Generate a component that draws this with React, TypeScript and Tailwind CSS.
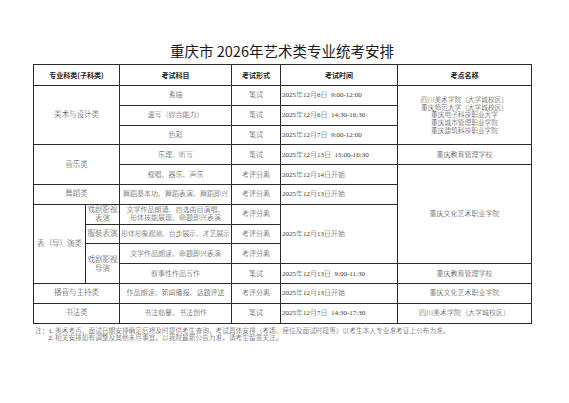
import React from 'react'

const td = 'border border-[#2b2b2b] p-0 text-center align-middle'
const tdLeft = 'border border-[#2b2b2b] p-0 pl-[1px] text-left align-middle whitespace-nowrap'

export default function App() {
  return (
    <div className="min-h-[403px] w-[569px] bg-white pt-[41px] font-['Liberation_Serif','Noto_Sans_CJK_SC',serif] font-light text-[#3a3a3a]">
      {/* Title */}
      <h1 className="ml-[33px] w-[498px] text-center font-['Noto_Sans_CJK_SC',sans-serif] text-[14.5px] font-normal leading-[20px] text-[#1a1a1a]">
        重庆市 2026年艺术类专业统考安排
      </h1>

      {/* Schedule table */}
      <table className="ml-[33px] mt-[3px] w-[498px] table-fixed border-collapse border-[1.5px] border-[#2b2b2b] text-[7px] leading-[8px]">
        <colgroup>
          <col className="w-[52px]" />
          <col className="w-[34px]" />
          <col className="w-[112px]" />
          <col className="w-[49px]" />
          <col className="w-[117px]" />
          <col className="w-[134px]" />
        </colgroup>
        <thead>
          <tr className="h-[21px] font-['Noto_Sans_CJK_SC',sans-serif] font-bold text-[#222]">
            <th colSpan={2} className={td}>专业科类(子科类)</th>
            <th className={td}>考试科目</th>
            <th className={td}>考试形式</th>
            <th className={td}>考试时间</th>
            <th className={td}>考点名称</th>
          </tr>
        </thead>
        <tbody>
          <tr className="h-[19.8px]">
            <td colSpan={2} rowSpan={3} className={`${td} text-[7.5px]`}>美术与设计类</td>
            <td className={td}>素描</td>
            <td className={td}>笔试</td>
            <td className={tdLeft}>2025年12月6日&nbsp;&nbsp;9:00-12:00</td>
            <td rowSpan={3} className={`${td} text-[6.7px] leading-[7.7px]`}>
              四川美术学院（大学城校区）<br />
              重庆师范大学（大学城校区）<br />
              重庆电子科技职业大学<br />
              重庆城市管理职业学院<br />
              重庆建筑科技职业学院
            </td>
          </tr>
          <tr className="h-[19.8px]">
            <td className={td}>速写（综合能力）</td>
            <td className={td}>笔试</td>
            <td className={tdLeft}>2025年12月6日&nbsp;&nbsp;14:30-16:30</td>
          </tr>
          <tr className="h-[19.8px]">
            <td className={td}>色彩</td>
            <td className={td}>笔试</td>
            <td className={tdLeft}>2025年12月7日&nbsp;&nbsp;9:00-12:00</td>
          </tr>

          <tr className="h-[19.8px]">
            <td colSpan={2} rowSpan={2} className={`${td} text-[7.5px]`}>音乐类</td>
            <td className={td}>乐理、听写</td>
            <td className={td}>笔试</td>
            <td className={tdLeft}>2025年12月13日&nbsp;&nbsp;15:00-16:30</td>
            <td className={td}>重庆教育管理学校</td>
          </tr>
          <tr className="h-[19.8px]">
            <td className={td}>视唱、器乐、声乐</td>
            <td className={td}>考评分离</td>
            <td className={tdLeft}>2025年12月14日开始</td>
            <td rowSpan={5} className={td}>重庆文化艺术职业学院</td>
          </tr>

          <tr className="h-[19.8px]">
            <td colSpan={2} className={`${td} text-[7.5px]`}>舞蹈类</td>
            <td className={`${td} whitespace-nowrap`}>舞蹈基本功、舞蹈表演、舞蹈即兴</td>
            <td className={td}>考评分离</td>
            <td className={tdLeft}>2025年12月13日开始</td>
          </tr>

          <tr className="h-[19.8px]">
            <td rowSpan={4} className={`${td} text-[7.5px]`}>表（导）演类</td>
            <td className={`${td} text-[7.5px] leading-[9px]`}>戏剧影视<br />表演</td>
            <td className={`${td} whitespace-nowrap`}>
              文学作品朗诵、自选曲目演唱、<br />
              形体技能展现、命题即兴表演
            </td>
            <td className={td}>考评分离</td>
            <td rowSpan={3} className={tdLeft}>2025年12月13日开始</td>
          </tr>
          <tr className="h-[19.8px]">
            <td className={`${td} text-[7.5px] whitespace-nowrap`}>服装表演</td>
            <td className={`${td} whitespace-nowrap tracking-[-0.2px]`}>形体形象观测、台步展示、才艺展示</td>
            <td className={td}>考评分离</td>
          </tr>
          <tr className="h-[19.8px]">
            <td rowSpan={2} className={`${td} text-[7.5px] leading-[9px]`}>戏剧影视<br />导演</td>
            <td className={td}>文学作品朗读、命题即兴表演</td>
            <td className={td}>考评分离</td>
          </tr>
          <tr className="h-[19.8px]">
            <td className={td}>叙事性作品写作</td>
            <td className={td}>笔试</td>
            <td className={tdLeft}>2025年12月13日&nbsp;&nbsp;9:00-11:30</td>
            <td className={td}>重庆教育管理学校</td>
          </tr>

          <tr className="h-[19.8px]">
            <td colSpan={2} className={`${td} text-[7.5px]`}>播音与主持类</td>
            <td className={td}>作品朗读、新闻播报、话题评述</td>
            <td className={td}>考评分离</td>
            <td className={tdLeft}>2025年12月13日开始</td>
            <td className={td}>重庆文化艺术职业学院</td>
          </tr>
          <tr className="h-[19.8px]">
            <td colSpan={2} className={`${td} text-[7.5px]`}>书法类</td>
            <td className={td}>书法临摹、书法创作</td>
            <td className={td}>笔试</td>
            <td className={tdLeft}>2025年12月7日&nbsp;&nbsp;14:30-17:30</td>
            <td className={td}>四川美术学院（大学城校区）</td>
          </tr>
        </tbody>
      </table>

      {/* Notes */}
      <div className="ml-[35px] mt-[3px] flex text-[6.7px] leading-[7px]">
        <span className="shrink-0">注：</span>
        <div className="flex flex-col">
          <span className="whitespace-nowrap">1. 美术考点、面试日期安排确定后将及时提供考生查询，考试具体安排（考场、座位及面试时段等）以考生本人专业准考证上公布为准。</span>
          <span className="whitespace-nowrap">2. 相关安排如有调整及其他未尽事宜，以我院最新公告为准，请考生留意关注。</span>
        </div>
      </div>
    </div>
  )
}
